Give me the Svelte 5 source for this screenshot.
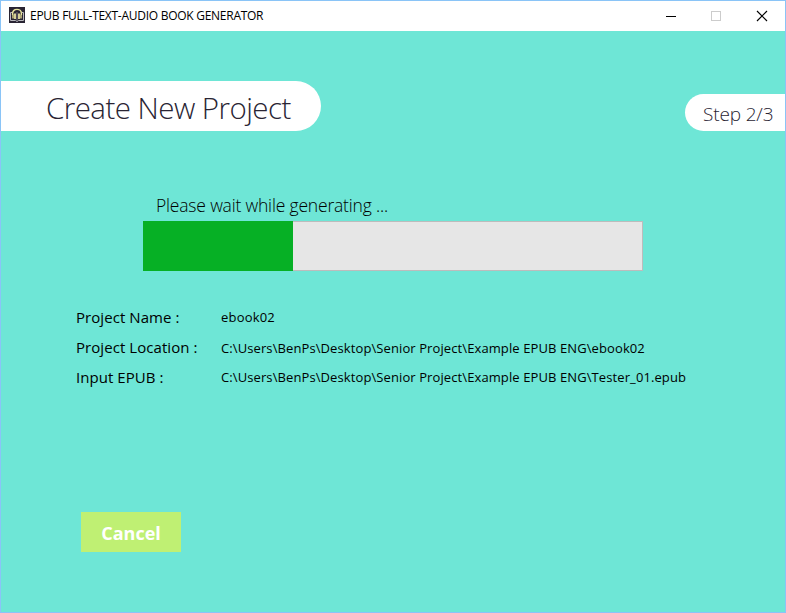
<script>
  const progress = 30;
  const details = [
    { label: 'Project Name :', value: 'ebook02', key: 'name' },
    { label: 'Project Location :', value: 'C:\\Users\\BenPs\\Desktop\\Senior Project\\Example EPUB ENG\\ebook02', key: 'location' },
    { label: 'Input EPUB :', value: 'C:\\Users\\BenPs\\Desktop\\Senior Project\\Example EPUB ENG\\Tester_01.epub', key: 'input' }
  ];
</script>

<div class="window">
  <header class="titlebar">
    <svg class="logo" width="16" height="16" viewBox="0 0 16 16" fill="none">
      <rect width="16" height="16" fill="#292433" />
      <path d="M3 5.5H1.5V13.5H6.5L8 14.5L9.5 13.5H14.5V5.5H13" stroke="#b9b8bd" />
      <path d="M3.6 8V6.5C3.6 1 12.4 1 12.4 6.5V8" stroke="#e9e6a0" stroke-width="1.4" />
      <path d="M6 6.5V12M10 6.5V12" stroke="#fff9b0" stroke-width="1.6" />
      <path d="M4 7.5V11.5M12 7.5V11.5" stroke="#ddd68e" stroke-width="1.4" />
      <path d="M8 5V13" stroke="#77717b" />
    </svg>
    <span class="title">EPUB FULL-TEXT-AUDIO BOOK GENERATOR</span>
    <div class="controls">
      <button aria-label="Minimize"><svg width="10" height="10"><path d="M0 5.5H10" stroke="#000" /></svg></button>
      <button aria-label="Maximize" disabled><svg width="10" height="10"><rect x=".5" y=".5" width="9" height="9" fill="none" stroke="#ccc" /></svg></button>
      <button aria-label="Close"><svg width="10" height="10"><path d="M0 0L10 10M10 0L0 10" stroke="#000" stroke-width="1.15" /></svg></button>
    </div>
  </header>

  <main>
    <div class="heading">
      <h1><span>Create New Project</span></h1>
      <div class="step"><span>Step 2/3</span></div>
    </div>

    <section class="generation">
      <p><span>Please wait while generating ...</span></p>
      <div class="bar"><div class="fill" style="width: {progress}%"></div></div>
    </section>

    <dl>
      {#each details as item (item.key)}
        <div class="row">
          <dt>{item.label}</dt>
          <dd class={item.key}>{item.value}</dd>
        </div>
      {/each}
    </dl>

    <button class="cancel">Cancel</button>
  </main>
</div>

<style>
  :global(body) { margin: 0; }
  .window {
    box-sizing: border-box;
    width: 786px;
    height: 613px;
    border: 1px solid #8ac4f7;
    background: #6ee6d6;
    font-family: "Open Sans", "Noto Sans", sans-serif;
    color: #000;
    overflow: hidden;
    white-space: nowrap;
  }
  .titlebar {
    display: flex;
    align-items: center;
    height: 30px;
    padding-left: 8px;
    background: #fff;
  }
  .logo { margin-top: -2px; }
  .title {
    margin-left: 5px;
    font-size: 12px;
    line-height: 16px;
    letter-spacing: -0.27px;
  }
  .controls { display: flex; margin-left: auto; }
  .controls button {
    display: flex;
    align-items: center;
    justify-content: center;
    width: 45px;
    height: 28px;
    padding: 0;
    border: 0;
    background: none;
  }
  .controls button:last-child { width: 47px; }
  .controls svg { display: block; overflow: visible; }
  main { display: flex; flex-direction: column; }
  .heading {
    display: flex;
    align-items: flex-end;
    justify-content: space-between;
    margin-top: 50px;
    color: #292433;
  }
  h1 {
    box-sizing: border-box;
    width: 320px;
    height: 50px;
    margin: 0;
    padding-left: 45px;
    border-radius: 0 25px 25px 0;
    background: #fff;
    font-size: 29.5px;
    font-weight: 340;
    line-height: 53px;
    letter-spacing: -0.55px;
  }
  .step {
    box-sizing: border-box;
    width: 100px;
    height: 37px;
    padding-left: 18px;
    border-radius: 19px 0 0 19px;
    background: #fff;
    font-size: 19px;
    font-weight: 340;
    line-height: 41px;
    letter-spacing: -0.15px;
  }
  .generation { margin: 60px 0 0 142px; }
  p {
    margin: 0;
    padding-left: 13px;
    height: 30px;
    font-size: 17.5px;
    font-weight: 340;
    line-height: 28px;
    letter-spacing: -0.18px;
  }
  .bar {
    width: 500px;
    height: 50px;
    background: #e6e6e6;
    box-shadow: inset 0 0 0 1px #bcbcbc;
  }
  .fill { height: 100%; background: #06b025; }
  dl { margin: 31px 0 0 75px; }
  .row { display: flex; height: 30px; line-height: 30px; }
  dt { width: 145px; font-size: 15px; letter-spacing: 0.06px; }
  dd { margin: 0; font-size: 13px; letter-spacing: 0.1px; }
  dd.name { letter-spacing: 0.2px; }
  dd.location { padding-top: 1px; }
  .cancel {
    width: 100px;
    height: 40px;
    margin: 120px 0 0 80px;
    padding: 2px 0 0;
    border: 0;
    background: #bff073;
    color: #fff;
    font: 700 18px/38px "Open Sans", "Noto Sans", sans-serif;
  }
</style>
